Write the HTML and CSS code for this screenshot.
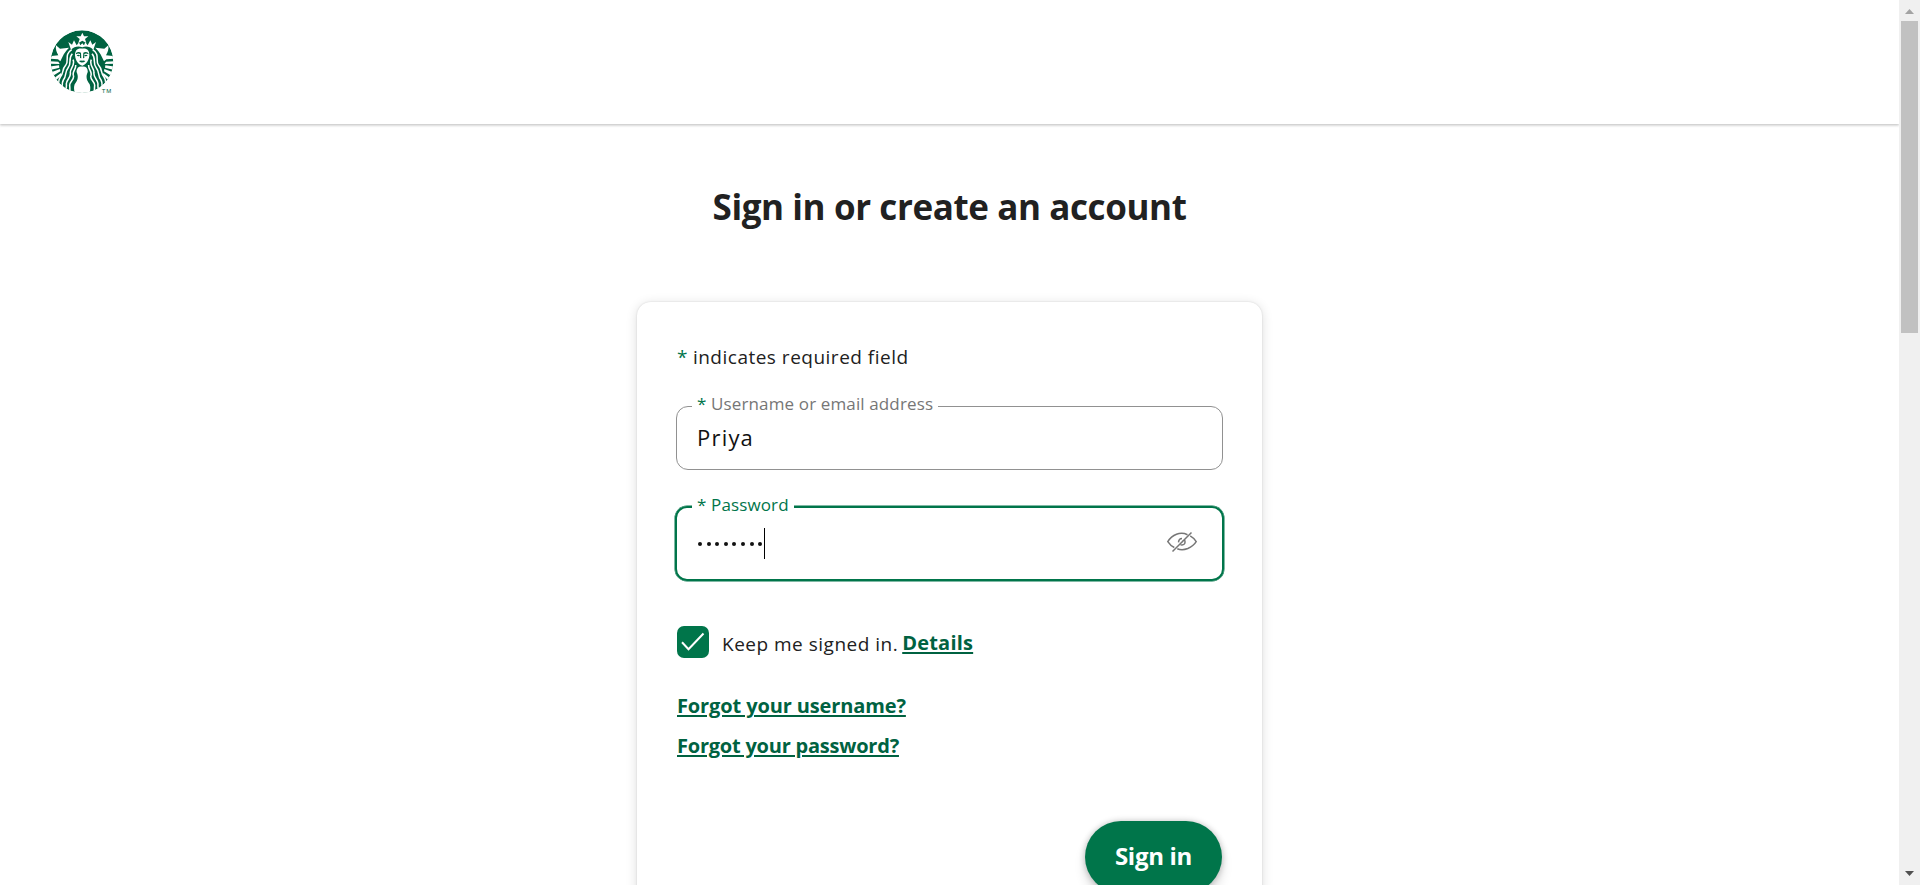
FILE: index.html
```html
<!DOCTYPE html>
<html lang="en">
<head>
<meta charset="utf-8">
<title>Sign in</title>
<link rel="stylesheet" href="styles.css">
</head>
<body>
<div class="page">
  <header class="header">
    <svg class="logo" viewBox="30 30 192 192" aria-label="Starbucks">
      <defs>
        <clipPath id="disk"><circle cx="126" cy="125" r="94"/></clipPath>
        <g id="half">
          <path class="w" d="M127 82 C114 77 103 80 93 89 L85 66 L96 74 L102 61 L110 76 L117 67 L121 76 L127 70Z"/>
          <path class="w" d="M48 76 L60 86 L87 83 C74 95 67 110 61 124 L54 118 L32 116 L35 108 L55 106 C50 98 46 88 48 76Z"/>
          <path class="w" d="M28 124l27 1 4 7-31-1zM28 140l29-4 1 7-27 7zM36 156l24-9 1 7-23 14zM44 173l19-14 1 7-16 15z"/>
          <path class="ws" d="M95 89 C71 104 89 122 77 136 C65 149 72 158 61 171 C54 181 58 190 52 202"/>
          <path class="ws" d="M97 101 C83 116 97 128 84 144 C73 158 81 166 70 180 C63 192 70 200 65 214"/>
          <path class="ws" d="M99 119 C107 135 89 146 91 159 C94 172 78 180 79 192 C81 204 75 210 76 222"/>
          <path class="ws" d="M107 135 C109 148 96 154 100 166 C105 178 89 184 89 196 C90 206 90 214 89 224"/>
          <path class="w" d="M127 140 C116 137 108 146 110 157 C117 173 112 181 104 193 C100 204 103 213 105 224 L127 224Z"/>
          <path class="w" d="M127 86 C111 84 105 92 105 106 C106 122 116 135 127 137Z"/>
          <path class="g" d="M108 99 Q115 94 123 98 L124 115 L120 114 L120 102 Q114 99 108 103ZM110 106q6-4 10 1-6 4-10-1zM117 123q5-3 10-1v5q-7 1-10-4z"/>
        </g>
      </defs>
      <g clip-path="url(#disk)">
        <circle class="g" cx="126" cy="125" r="94"/>
        <use href="#half"/>
        <use href="#half" transform="translate(253 0) scale(-1 1)"/>
        <path class="w" d="M127 38l5 11h13l-10 8 4 12-12-7-12 7 4-12-10-8h13z"/>
      </g>
      <path class="w" d="M183 200h39v22h-39z"/>
      <text class="tm" x="185" y="219" textLength="29">TM</text>
    </svg>
  </header>
  <main class="main">
    <h1 class="title"><span>Sign in or create an account</span></h1>
    <form class="card">
      <p class="required"><span class="star">*</span> indicates required field</p>
      <div class="field">
        <label class="label"><span class="star">*</span> Username or email address</label>
        <span class="value">Priya</span>
      </div>
      <div class="field focused">
        <label class="label">* Password</label>
        <span class="dots"><i></i><i></i><i></i><i></i><i></i><i></i><i></i><i></i><b class="caret"></b></span>
        <svg class="eye" viewBox="0 0 32 24"><path d="M21.500 4.700 Q16 2.200 10.500 4.300 Q5 6.500 1.800 11.600 Q4.400 15.600 8.300 17.500M11.300 18.700 Q16 20.800 21.800 18.500 Q27.500 16 30.200 11.600 Q27.700 7.800 24.200 5.900M12.500 12.400 Q12.700 8.500 16 8.400M18.600 9.800 Q20.200 14.500 16 15.100 L14.600 14.700M16 10.900l1.300 1M6.500 21.500 25.500 2.500"/></svg>
      </div>
      <div class="keep">
        <span class="check"><svg viewBox="0 0 32 32"><path d="M5 16.300 11.500 23.300 26.500 7.500"/></svg></span>
        <span class="keep-text">Keep me signed in.</span>
        <a class="link details">Details</a>
      </div>
      <div class="links">
        <a class="link user">Forgot your username?</a>
        <a class="link pass">Forgot your password?</a>
      </div>
      <button class="submit" type="button">Sign in</button>
    </form>
  </main>
</div>
<div class="scrollbar">
  <svg class="arrow up" viewBox="0 0 9 5"><path d="M0 5 4.500 0 9 5z"/></svg>
  <div class="thumb"></div>
  <svg class="arrow down" viewBox="0 0 9 5"><path d="M0 0h9L4.500 5z"/></svg>
</div>
</body>
</html>
```
FILE: styles.css
```css
* { box-sizing: border-box; }
body { margin: 0; height: 885px; overflow: hidden; display: flex; background: #fff; color: #212121; font-family: "Open Sans", "Noto Sans", sans-serif; }
.page { flex: 1; height: 885px; overflow: hidden; }
.header { height: 124px; padding: 30px 50px; box-shadow: 0 1px 3px rgba(0,0,0,.14), 0 2px 2px rgba(0,0,0,.08), 0 0 2px rgba(0,0,0,.08); }
.logo { display: block; width: 64px; height: 64px; }
.g { fill: #006341; }
.w { fill: #fff; }
.ws { fill: none; stroke: #fff; stroke-width: 4.600; }
.tm { fill: #006341; font: 18px "Liberation Sans", sans-serif; }
.main { display: flex; flex-direction: column; align-items: center; }
.title { margin: 58px 0 71px; height: 49px; line-height: 49px; font-size: 35px; font-weight: 700; white-space: nowrap; letter-spacing: -.4px; }
.card { width: 625px; height: 760px; padding: 41px 39px; border-radius: 14px; box-shadow: 0 0 2px rgba(0,0,0,.14), 0 2px 12px rgba(0,0,0,.14); }
.required { margin: 0 0 35px 1px; height: 28px; line-height: 28px; font-size: 19px; letter-spacing: .5px; white-space: nowrap; }
.required .star { letter-spacing: 0; }
.star { color: #00754a; }
.field { position: relative; display: flex; align-items: center; height: 64px; padding: 0 20px; border: 1px solid #919191; border-radius: 12px; }
.label { position: absolute; left: 15px; top: -16px; height: 26px; line-height: 26px; padding: 0 5px; background: #fff; color: #767676; font-size: 17px; letter-spacing: .13px; white-space: nowrap; }
.value { margin-top: -3px; font-size: 22px; letter-spacing: 1.200px; color: #111; }
.focused { height: 75px; margin: 36px -1px 0; border: 2px solid #00754a; box-shadow: 0 0 0 .5px #00754a; }
.focused .label { color: #00754a; }
.dots { display: flex; align-items: center; gap: 4.600px; flex: 1; padding-left: 1px; }
.dots i { width: 4px; height: 4px; border-radius: 50%; background: #111; }
.caret { width: 1px; height: 31px; margin-left: -3px; background: #000; }
.eye { width: 32px; height: 24px; margin: -3px 4px 0 0; fill: none; stroke: #767676; stroke-width: 1.500; }
.keep { display: flex; align-items: center; height: 32px; margin: 45px 0 0 1px; white-space: nowrap; }
.check { width: 32px; height: 32px; border-radius: 7px; background: #00754a; }
.check svg { display: block; fill: none; stroke: #fff; stroke-width: 2; }
.keep-text { margin: 4px 0 0 13px; font-size: 19px; letter-spacing: .5px; }
.link { color: #006241; font-size: 20px; font-weight: 700; text-decoration: underline; text-decoration-thickness: 2px; text-underline-offset: 2px; white-space: nowrap; }
.details { margin-left: 4px; letter-spacing: .2px; }
.user { letter-spacing: -.12px; }
.pass { letter-spacing: -.22px; }
.links { display: flex; flex-direction: column; align-items: flex-start; margin: 28px 0 0 1px; line-height: 40px; }
.submit { display: block; width: 137px; height: 72px; margin: 55px 1px 0 auto; padding: 0 0 4px; border: 0; border-radius: 36px; background: #00754a; color: #fff; font: 700 24px "Open Sans", sans-serif; letter-spacing: -.3px; box-shadow: 0 0 6px rgba(0,0,0,.24), 0 8px 12px rgba(0,0,0,.14); }
.scrollbar { width: 21px; height: 885px; padding: 9px 2px; background: #f0f0f0; display: flex; flex-direction: column; align-items: center; }
.arrow { width: 9px; height: 5px; }
.up { fill: #a3a3a3; }
.down { fill: #505050; margin-top: auto; }
.thumb { width: 17px; height: 312px; margin-top: 7px; background: #c1c1c1; }
```
